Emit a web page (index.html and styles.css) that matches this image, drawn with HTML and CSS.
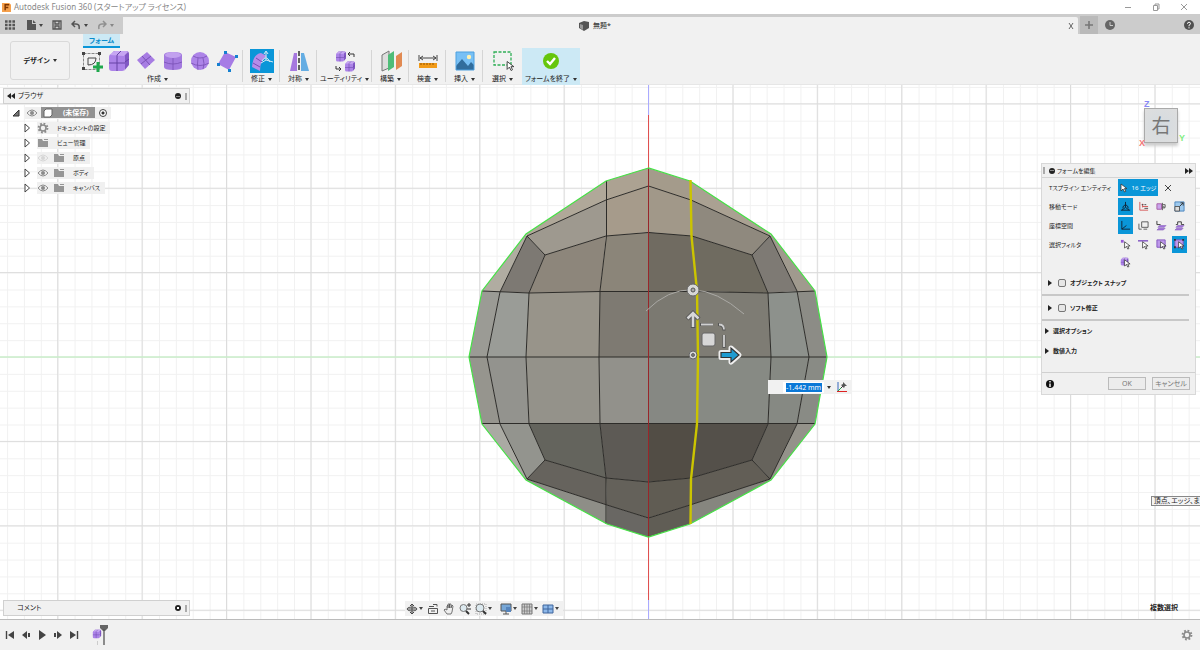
FILE: index.html
```html
<!DOCTYPE html>
<html lang="ja">
<head>
  <meta charset="UTF-8">
  <meta name="viewport" content="width=device-width, initial-scale=1.0">
  <title>Autodesk Fusion 360</title>
  <link rel="stylesheet" href="styles.css">
</head>
<body>
  <!-- Shared icons -->
  <svg class="sprites" aria-hidden="true">
    <symbol id="folder" viewBox="0 0 12 10"><path d="M1 1h4l1 2h-5zM1 3h10v6H1zM7 1h4v1H7z" fill="#969696"/></symbol>
    <symbol id="eye" viewBox="0 0 12 10"><path d="M1 5Q6-1 11 5Q6 11 1 5z" fill="none" stroke="#8b8b8b"/><circle cx="6" cy="5" r="2" fill="#8b8b8b"/></symbol>
    <symbol id="tri" viewBox="0 0 8 10"><path d="M2 1L6.500 5 2 9z" fill="#fff" stroke="#444"/></symbol>
    <symbol id="gear" viewBox="0 0 12 12"><circle cx="6" cy="6" r="4.400" fill="none" stroke="#8b8b8b" stroke-width="2" stroke-dasharray="1.800 1.650"/><circle cx="6" cy="6" r="3" fill="none" stroke="#8b8b8b" stroke-width="1.600"/></symbol>
    <symbol id="cursor" viewBox="0 0 8 10"><path d="M1 1v7l2-2 1.500 3 1.300-.7L4.400 5.600H7z" fill="#fff" stroke="#333" stroke-width=".8"/></symbol>
    <symbol id="box" viewBox="0 0 24 24"><path d="M7 2h12q3 0 3 3v11l-5 6q1-1 1-3V9q0-2-2-2H3z" fill="#8259c4"/><rect x="2" y="5" width="16" height="17" rx="3" fill="#ac83e8"/><path d="M3 6q3-4 5-4h11q2 0 2 1l-4 4z" fill="#c6a6f2"/><path d="M10 6v16M2 14h16M18 13l4-3M10 6l4-4" stroke="#6743a5" fill="none"/></symbol>
  </svg>

  <header class="titlebar">
    <svg class="app-icon" viewBox="0 0 10 10"><path d="M0 0h8l2 2v8H0z" fill="#f5a04c"/><path d="M3.500 8V2H8M3.500 5H7" stroke="#7d3500" stroke-width="1.600" fill="none"/></svg>
    <span class="app-title">Autodesk Fusion 360 (スタートアップ ライセンス)</span>
    <div class="window-buttons">
      <button aria-label="最小化"><svg viewBox="0 0 8 8"><path d="M1 4.500h6"/></svg></button>
      <button aria-label="元に戻す"><svg viewBox="0 0 8 8"><path d="M1.500 2.500h4v5h-4zM3 2V1h4v5H6"/></svg></button>
      <button aria-label="閉じる"><svg viewBox="0 0 8 8"><path d="M1 1l6 6M7 1L1 7"/></svg></button>
    </div>
  </header>

  <nav class="tabbar">
    <div class="quick">
      <button aria-label="データ パネル"><svg viewBox="0 0 10 10" width="10" height="10"><path d="M0 1.500h10M0 5h10M0 8.500h10" stroke="#555" stroke-width="2.400" stroke-dasharray="2.600 1.100"/></svg></button>
      <button class="caret" aria-label="ファイル"><svg viewBox="0 0 10 10" width="10" height="10"><path d="M1 0h5v4h4v6H1zM7 0l3 3H7z" fill="#555"/></svg></button>
      <button aria-label="保存"><svg viewBox="0 0 10 10" width="10" height="10"><path d="M1 1h8v8H1zM3 1v3h4V1M3 9V6h4v3" fill="none" stroke="#555" stroke-width="1.300"/></svg></button>
      <button class="caret" aria-label="元に戻す"><svg viewBox="0 0 10 10" width="10" height="10"><path d="M1 4h4q4 0 3 5M4 1L1 4l3 3" fill="none" stroke="#555" stroke-width="1.500"/></svg></button>
      <button class="caret faded" aria-label="やり直し"><svg viewBox="0 0 10 10" width="10" height="10"><path d="M9 4H5Q1 4 2 9M6 1l3 3-3 3" fill="none" stroke="#555" stroke-width="1.500"/></svg></button>
    </div>
    <div class="doc-tab">
      <span class="doc-name"><svg viewBox="0 0 10 10" width="10" height="10"><path d="M0 2l5-2 5 1v6L5 10 0 7z" fill="#555"/><path d="M1 3l3 1v5L1 7z" fill="#999"/></svg>無題*</span>
      <button class="tab-close" aria-label="タブを閉じる"><svg viewBox="0 0 8 8" width="8" height="8"><path d="M2 1l4 6M6 1L2 7" stroke="#666"/></svg></button>
    </div>
    <div class="tab-tools">
      <button class="new-tab" aria-label="新規"><svg viewBox="0 0 10 10" width="10" height="10"><path d="M5 1v8M1 5h8" stroke="#777" stroke-width="1.600"/></svg></button>
      <button class="jobs" aria-label="ジョブ"><svg viewBox="0 0 10 10" width="10" height="10"><circle cx="5" cy="5" r="5" fill="#666"/><path d="M5 2v3.500h3" stroke="#ccc" fill="none"/></svg></button>
      <button class="help" aria-label="ヘルプ"><svg viewBox="0 0 10 10" width="10" height="10"><circle cx="5" cy="5" r="5" fill="#505050"/><path d="M3.500 3.800Q3.500 2.200 5 2.200T6.500 3.700Q6.500 4.500 5 5.200V6.300M5 7.200v1.200" stroke="#fff" fill="none"/></svg></button>
    </div>
  </nav>

  <!-- Ribbon -->
  <section class="ribbon">
    <button class="workspace">デザイン <i class="arrow"></i></button>
    <div class="ribbon-body">
      <a class="ribbon-tab" href="#form">フォーム</a>
      <div class="groups">
        <div class="group create">
          <div class="icons">
            <button aria-label="スケッチを作成"><svg viewBox="0 0 24 24"><path d="M3.500 4.500h16v16h-16z" fill="none" stroke="#888" stroke-dasharray="3 1"/><path d="M8 16V9h8q0 7-8 7z" fill="none" stroke="#444"/><path d="M2 3h3v3H2zM18 3h3v3h-3zM2 18h3v3H2z" fill="#444"/><path d="M18 13v10M13 18h10" stroke="#1fa84c" stroke-width="3"/></svg></button>
            <button aria-label="ボックス"><svg viewBox="0 0 24 24"><use href="#box"/></svg></button>
            <button aria-label="平面"><svg viewBox="0 0 24 24"><path d="M3 11L13 3l8 8-10 9z" fill="#a77de3"/><path d="M8 7l8 9M7 15L17 7" stroke="#7950b5"/></svg></button>
            <button aria-label="円柱"><svg viewBox="0 0 24 24"><path d="M3 6q0-3 9-3t9 3v12q0 3-9 3t-9-3z" fill="#a37adf"/><ellipse cx="12" cy="6" rx="8" ry="3" fill="#c2a1ef"/><path d="M3 13q9 4 18 0M12 9v12" fill="none" stroke="#7950b5" stroke-width=".8"/></svg></button>
            <button aria-label="球"><svg viewBox="0 0 24 24"><circle cx="12" cy="12" r="9" fill="#ad84e8"/><path d="M5 7q7 4 14 0M3 14q9 5 18 0M10 9q-1 6 0 12M15 9q2 6 0 11" fill="none" stroke="#7950b5" stroke-width=".8"/></svg></button>
            <button aria-label="面"><svg viewBox="0 0 24 24"><path d="M10 3l11 5-7 13L3 15z" fill="#a67be5"/><path d="M9 2h3v3H9zM20 6h3v3h-3zM2 14h3v3H2zM13 20h3v3h-3z" fill="#1580d0"/></svg></button>
          </div>
          <button class="label">作成<i class="arrow"></i></button>
        </div>
        <div class="group">
          <button class="active" aria-label="フォームを編集"><svg viewBox="0 0 24 24"><path d="M2 18q1-13 9-14l6 3q-7 4-7 15z" fill="#b58ce9"/><path d="M6 9l6 4M3 14l7 4" stroke="#764bb4"/><path d="M16 11V3M16 11l7 2M16 11l-5 3M14 5l2-3 2 3M12 12q4-7 8 1" fill="none" stroke="#d5eaf5"/></svg></button>
          <button class="label">修正<i class="arrow"></i></button>
        </div>
        <div class="group">
          <button aria-label="対称"><svg viewBox="0 0 24 24"><path d="M3 22L7 4h3v18z" fill="#a678df"/><path d="M14 4h3l5 18h-8z" fill="#64ade3"/><path d="M12 2v21" stroke="#333" stroke-width="1.500" stroke-dasharray="5 2"/></svg></button>
          <button class="label">対称<i class="arrow"></i></button>
        </div>
        <div class="group wide">
          <button aria-label="ユーティリティ"><svg viewBox="0 0 24 24"><use href="#box" x="2" y="1" width="12" height="13"/><use href="#box" x="11" y="11" width="12" height="13"/><path d="M21 8V5h-6M17 3l-2 2 2 2M3 17v3h5M6 18l2 2-2 2" stroke="#333" fill="none"/></svg></button>
          <button class="label">ユーティリティ<i class="arrow"></i></button>
        </div>
        <div class="group">
          <button aria-label="構築"><svg viewBox="0 0 24 24"><path d="M3 6l7-4v17l-7 3z" fill="#ddd" stroke="#777"/><path d="M9 6l6-4v16l-6 4z" fill="#4ebd78"/><path d="M17 7l6-4v14l-6 4z" fill="#e18a52"/></svg></button>
          <button class="label">構築<i class="arrow"></i></button>
        </div>
        <div class="group">
          <button aria-label="検査"><svg viewBox="0 0 24 24"><path d="M3 14h18v5H3z" fill="#f29b18"/><path d="M5 14v2M8 14v2M11 14v2M14 14v2M17 14v2" stroke="#945500"/><path d="M3 6v6M21 6v6M4 9h16M7 7L4 9l3 2M17 7l3 2-3 2" stroke="#444" fill="none"/></svg></button>
          <button class="label">検査<i class="arrow"></i></button>
        </div>
        <div class="group">
          <button aria-label="挿入"><svg viewBox="0 0 24 24"><path d="M3 3h18v18H3z" fill="#78c0f5"/><path d="M3 17l6-7 6 7 3-4 3 3v5H3z" fill="#316d9d"/><circle cx="16" cy="8" r="2.200" fill="#fff2b3"/><path d="M3 3h18v18H3z" fill="none" stroke="#4ca0df"/></svg></button>
          <button class="label">挿入<i class="arrow"></i></button>
        </div>
        <div class="group last">
          <button aria-label="選択"><svg viewBox="0 0 24 24"><path d="M3 3h17v13H3z" fill="none" stroke="#30af57" stroke-width="1.300" stroke-dasharray="3 1.500"/><use href="#cursor" x="15" y="11" width="9" height="12"/></svg></button>
          <button class="label">選択<i class="arrow"></i></button>
        </div>
        <div class="group finish">
          <button aria-label="フォームを終了"><svg viewBox="0 0 24 24"><circle cx="12" cy="12" r="8" fill="#65c60c"/><path d="M8 12l3 3 5-6" fill="none" stroke="#fff" stroke-width="2.400"/></svg></button>
          <button class="label">フォームを終了<i class="arrow"></i></button>
        </div>
      </div>
    </div>
  </section>

  <!-- Modelling canvas -->
  <main class="viewport">
    <svg class="scene" viewBox="0 85 1200 534" preserveAspectRatio="xMidYMid slice">
      <defs>
        <pattern id="minor" x="648.500" y="357" width="16.880" height="16.880" patternUnits="userSpaceOnUse"><path d="M.5 0v17M0 .5h17" stroke="#f1f1f1" fill="none"/></pattern>
        <pattern id="major" x="648" y="356.500" width="84.400" height="84.400" patternUnits="userSpaceOnUse"><path d="M.5 0v85M0 .5h85" stroke="#dcdcdc" fill="none"/></pattern>
      </defs>
      <rect y="85" width="1200" height="534" fill="url(#minor)"/>
      <rect y="85" width="1200" height="534" fill="url(#major)"/>
      <path d="M0 357h1200" stroke="#bff5bf"/>
      <path d="M648.500 85v30M648.500 600v19" stroke="#aaaaff"/>
      <path d="M648.500 115v485" stroke="#e05050"/>

      <!-- outer ring of faces -->
      <g>
        <path d="M648 168L606 181V200L648 186z" fill="#aca292"/>
        <path d="M606 181L526 234 527 236 606 200z" fill="#b0a899"/>
        <path d="M526 234L482 291 500 292 527 236z" fill="#b0aca1"/>
        <path d="M482 291L469 357H487L500 292z" fill="#9b9b95"/>
        <path d="M469 357L482 424H500L487 357z" fill="#96958e"/>
        <path d="M482 424L526 480 527 479 500 424z" fill="#aaaaa3"/>
        <path d="M526 480L607 524V505L527 479z" fill="#8e8e87"/>
        <path d="M607 524L648 537V518L607 505z" fill="#696763"/>
        <path d="M648 537L690 524V505L648 518z" fill="#605d55"/>
        <path d="M690 524L771 480 770 479 690 505z" fill="#86867f"/>
        <path d="M771 480L815 424H797L770 479z" fill="#94928a"/>
        <path d="M815 424L827 357H809L797 424z" fill="#898b85"/>
        <path d="M827 357L815 291H797L809 357z" fill="#8c8c86"/>
        <path d="M815 291L771 234 770 236 797 291z" fill="#a09a8e"/>
        <path d="M771 234L690 181 691 200 770 236z" fill="#aaa192"/>
        <path d="M690 181L648 168V186L691 200z" fill="#a49b8b"/>
      </g>
      <!-- second ring -->
      <g>
        <path d="M648 186L606 200V236L648 232z" fill="#a69b8b"/>
        <path d="M606 200L527 236 545 255 606 236z" fill="#9e998f"/>
        <path d="M527 236L500 292 529 293 545 255z" fill="#7d7973"/>
        <path d="M500 292L487 357H526L529 293z" fill="#9a9c97"/>
        <path d="M487 357L500 424H529L526 357z" fill="#93938e"/>
        <path d="M500 424L527 479 545 460 529 424z" fill="#93948e"/>
        <path d="M527 479L607 505 606 478 545 460z" fill="#66635d"/>
        <path d="M607 505L648 518V482L606 478z" fill="#64615a"/>
        <path d="M648 518L690 505 691 478 648 482z" fill="#605c53"/>
        <path d="M690 505L770 479 752 460 691 478z" fill="#625e56"/>
        <path d="M770 479L797 424H768L752 460z" fill="#66635c"/>
        <path d="M797 424L809 357H771L768 424z" fill="#868983"/>
        <path d="M809 357L797 291 768 293 771 357z" fill="#8d918c"/>
        <path d="M797 291L770 236 752 255 768 293z" fill="#7e7a74"/>
        <path d="M770 236L691 200 692 236 752 255z" fill="#8f897e"/>
        <path d="M691 200L648 186V232L692 236z" fill="#a19889"/>
      </g>
      <!-- front faces -->
      <g>
        <path d="M545 255L606 236 600 292 529 293z" fill="#8d867b"/>
        <path d="M606 236L648 232V291L600 292z" fill="#8b8579"/>
        <path d="M648 232L692 236 697 291H648z" fill="#706b61"/>
        <path d="M692 236L752 255 768 293 697 291z" fill="#6f6b60"/>
        <path d="M529 293L600 291 599 357H526z" fill="#98948a"/>
        <path d="M600 291H648V357H599z" fill="#7e7a72"/>
        <path d="M648 291H697L698 357H648z" fill="#7b7971"/>
        <path d="M697 291L768 293 771 357H698z" fill="#7e7c74"/>
        <path d="M526 357H599L600 424H529z" fill="#94928a"/>
        <path d="M599 357H648V424H600z" fill="#92918b"/>
        <path d="M648 357H698L697 424H648z" fill="#868883"/>
        <path d="M698 357H771L768 424H697z" fill="#878a84"/>
        <path d="M529 424H600L606 478 545 460z" fill="#64645d"/>
        <path d="M600 424H648V482L606 478z" fill="#5d5a55"/>
        <path d="M648 424H697L691 478 648 482z" fill="#524d45"/>
        <path d="M697 424H768L752 460 691 478z" fill="#54504a"/>
      </g>
      <!-- edges -->
      <g fill="none" stroke="#2d2c29">
        <path d="M648.500 186L606 200 527 236 500 292 487 357 500 424 527 479 607 505 648.500 518 690 505 770 479 797 424 809 357 797 291 770 236 691 200z"/>
        <path d="M648.500 232.500L606 236 545 255 529 293 526 357 529 424 545 460 606 478 648.500 482 691 478 752 460 768 424 771 357 768 293 752 255 692 236z"/>
        <path d="M606.500 181V236L600 291 599 357 600 424 606 478V524M527 236L545 255M770 236L752 255M527 479L545 460M770 479L752 460"/>
        <path d="M482 291L529 293 600 291.500H697L768 293 815 291M469 357H827M482 423.500H815"/>
      </g>
      <path d="M648.500 168V537" stroke="#98262a"/>
      <path d="M648.500 168L606 181 526 234 482 291 469 357 482 424 526 480 607 524 648.500 537 690 524 771 480 815 424 827 357 815 291 771 234 690 181z" fill="none" stroke="#45e245" stroke-width="1.200"/>
      <path d="M690.500 180L691.500 236 697 291 698 357 697 424 691 479 690.500 524" fill="none" stroke="#cbc400" stroke-width="2.400"/>

      <!-- move manipulator -->
      <path d="M646 311Q690 267 744 314" fill="none" stroke="#aaa9a5"/>
      <g stroke="#666" fill="#d7d7d7">
        <circle cx="693" cy="290" r="6"/>
        <circle cx="693" cy="290" r="2" fill="#aaa" stroke="#555"/>
        <circle cx="693" cy="355" r="4"/>
        <circle cx="693" cy="355" r="1.500" fill="#777"/>
        <rect x="702" y="333" width="13" height="13" rx="2"/>
      </g>
      <path d="M693 328V313M687 319l6-6 6 6" fill="none" stroke="#555" stroke-width="4.400"/>
      <path d="M693 327V313M687.500 318.500l5.500-5.500 5.500 5.500" fill="none" stroke="#d7d7d7" stroke-width="2.600"/>
      <path d="M700 324.500h13M718 324.500q6 0 6 6M724 335v13" fill="none" stroke="#555" stroke-width="3"/>
      <path d="M701 324.500h12M719 324.500q5 0 5 5M724 335v12" fill="none" stroke="#d0d0d0" stroke-width="1.800"/>
      <path d="M721 352.500h10V348l8 7-8 7v-4.500h-10z" fill="#1e9bd0" stroke="#eee" stroke-width="5" stroke-linejoin="round"/>
      <path d="M721 352.500h10V348l8 7-8 7v-4.500h-10z" fill="#1e9bd0" stroke="#333" stroke-width="1.200"/>
    </svg>

    <div class="value-box">
      <input type="text" value="-1.442 mm" aria-label="距離">
      <i class="arrow"></i>
      <svg viewBox="0 0 12 12" width="12" height="12"><path d="M2 1v10" stroke="#3568bc"/><path d="M1 10.500h10" stroke="#d22"/><path d="M2 10l4-4" stroke="#2a4"/><path d="M5 7l2-2" stroke="#333"/><path d="M7 1l4 4-2 0-1 2-3-3 2-1z" fill="#555"/></svg>
    </div>

    <!-- Browser palette -->
    <aside class="browser">
      <div class="palette-head">
        <svg viewBox="0 0 8 6" width="8" height="6"><path d="M4 0v6L0 3zM8 0v6L4 3z" fill="#222"/></svg>
        <span>ブラウザ</span>
        <i class="dot minus"></i><i class="grip"></i>
      </div>
      <ul class="tree">
        <li class="root">
          <svg viewBox="0 0 8 8" width="8" height="8"><path d="M7 1v6H1z" fill="#777" stroke="#333"/></svg>
          <span class="node"><svg width="12" height="10"><use href="#eye"/></svg><span class="doc"><svg viewBox="0 0 10 10" width="10" height="10"><path d="M1 3l2-2h6v6L7 9H1z" fill="#fff" stroke="#666"/></svg>(未保存)</span><i class="radio"></i></span>
        </li>
        <li><svg width="8" height="10"><use href="#tri"/></svg><span class="node"><svg width="12" height="12"><use href="#gear"/></svg><span>ドキュメントの設定</span></span></li>
        <li><svg width="8" height="10"><use href="#tri"/></svg><span class="node"><svg width="12" height="10"><use href="#folder"/></svg><span>ビュー管理</span></span></li>
        <li><svg width="8" height="10"><use href="#tri"/></svg><span class="node"><svg class="off" width="12" height="10"><use href="#eye"/></svg><svg width="12" height="10"><use href="#folder"/></svg><span>原点</span></span></li>
        <li><svg width="8" height="10"><use href="#tri"/></svg><span class="node"><svg width="12" height="10"><use href="#eye"/></svg><svg width="12" height="10"><use href="#folder"/></svg><span>ボディ</span></span></li>
        <li><svg width="8" height="10"><use href="#tri"/></svg><span class="node"><svg width="12" height="10"><use href="#eye"/></svg><svg width="12" height="10"><use href="#folder"/></svg><span>キャンバス</span></span></li>
      </ul>
    </aside>

    <div class="comments palette-head"><span>コメント</span><i class="dot plus"></i><i class="grip"></i></div>

    <!-- View cube -->
    <div class="viewcube">
      <span class="axis z">Z</span>
      <button class="face">右</button>
      <span class="axis x">X</span>
      <span class="axis y">Y</span>
    </div>

    <!-- Edit form dialog -->
    <form class="dialog">
      <div class="dialog-head"><i class="grip"></i><i class="dot minus"></i><span>フォームを編集</span><svg viewBox="0 0 8 6" width="8" height="6"><path d="M0 0v6l4-3zM4 0v6l4-3z" fill="#222"/></svg></div>
      <div class="rows">
        <div class="row">
          <span class="name">Tスプライン エンティティ</span>
          <button type="button" class="pick"><svg width="8" height="10"><use href="#cursor"/></svg>16 エッジ</button>
          <button type="button" class="clear" aria-label="クリア"><svg viewBox="0 0 8 8" width="8" height="8"><path d="M1 1l6 6M7 1L1 7" stroke="#444"/></svg></button>
        </div>
        <div class="row">
          <span class="name">移動モード</span>
          <button type="button" class="tool on" aria-label="マルチ"><svg viewBox="0 0 12 12"><path d="M6 7V1M6 7l-4 3M6 7l4 3M3 8q0-3 3-4 3 1 3 4M1 10h10" fill="none" stroke="#123"/></svg></button>
          <button type="button" class="tool" aria-label="移動"><svg viewBox="0 0 12 12"><path d="M2 1v9h9M5 6h6M5 3v4" fill="none" stroke="#d45454"/><path d="M4 4h2M7 4h2M7 8h4" stroke="#444"/></svg></button>
          <button type="button" class="tool" aria-label="回転"><svg viewBox="0 0 12 12"><path d="M1 3h5v6H1z" fill="#c9a4ec" stroke="#a65ba5"/><path d="M7 2v8M7 4h3v3H8M9 5.500L7.500 7 9 8.500" fill="none" stroke="#555"/></svg></button>
          <button type="button" class="tool" aria-label="尺度"><svg viewBox="0 0 12 12"><path d="M1 1h10v10H1z" fill="#9dc9ee" stroke="#4a83bd"/><path d="M1 6h5v5H1z" fill="#ddd" stroke="#555"/><path d="M6 6l4-4M7 2h3v3" fill="none" stroke="#333"/></svg></button>
        </div>
        <div class="row">
          <span class="name">座標空間</span>
          <button type="button" class="tool on" aria-label="ワールド空間"><svg viewBox="0 0 12 12"><path d="M2 1v9h9M2 10l5-4" fill="none" stroke="#123"/></svg></button>
          <button type="button" class="tool" aria-label="ビュー空間"><svg viewBox="0 0 12 12"><path d="M4 2h7v6H4zM6 10h4M1 4v6h3" fill="none" stroke="#555"/></svg></button>
          <button type="button" class="tool" aria-label="選択項目の空間"><svg viewBox="0 0 12 12"><path d="M1 1v4h4" fill="none" stroke="#333"/><path d="M4 6h7l-2 2H2zM3 9h7l-2 2H1z" fill="#a474dc" stroke="#7950b5" stroke-width=".5"/></svg></button>
          <button type="button" class="tool" aria-label="ローカル空間"><svg viewBox="0 0 12 12"><path d="M2 5h2V2h4v3h3" fill="none" stroke="#333"/><path d="M4 6h7l-2 2H2zM3 9h7l-2 2H1z" fill="#a474dc" stroke="#7950b5" stroke-width=".5"/></svg></button>
        </div>
        <div class="row">
          <span class="name">選択フィルタ</span>
          <button type="button" class="tool" aria-label="頂点"><svg viewBox="0 0 12 12"><path d="M1 1h3v3H1z" fill="#9658d8"/><use href="#cursor" x="4" y="2" width="8" height="10"/></svg></button>
          <button type="button" class="tool" aria-label="エッジ"><svg viewBox="0 0 12 12"><path d="M0 2h11" stroke="#7c4ec0" stroke-width="1.500"/><use href="#cursor" x="4" y="2" width="8" height="10"/></svg></button>
          <button type="button" class="tool" aria-label="面"><svg viewBox="0 0 12 12"><path d="M1 1h9v8H1z" fill="#be98eb" stroke="#8254c0"/><use href="#cursor" x="4" y="2" width="8" height="10"/></svg></button>
          <button type="button" class="tool on" aria-label="すべて"><svg viewBox="0 0 12 12"><path d="M1 1h9v8H1z" fill="#be98eb" stroke="#8254c0"/><path d="M0 0h2v2H0zM9 0h2v2H9zM0 8h2v2H0z" fill="#333"/><use href="#cursor" x="4" y="2" width="8" height="10"/></svg></button>
        </div>
        <div class="row short">
          <span class="name"></span>
          <button type="button" class="tool" aria-label="ボディ"><svg viewBox="0 0 12 12"><use href="#box" width="10" height="10"/><use href="#cursor" x="4" y="2" width="8" height="10"/></svg></button>
        </div>
      </div>
      <div class="fold ruled"><i class="right"></i><input type="checkbox" id="snap"><label for="snap">オブジェクト スナップ</label></div>
      <div class="fold ruled"><i class="right"></i><input type="checkbox" id="soft"><label for="soft">ソフト修正</label></div>
      <div class="fold flat"><i class="right"></i><span>選択オプション</span></div>
      <div class="fold flat"><i class="right"></i><span>数値入力</span></div>
      <div class="dialog-foot">
        <svg viewBox="0 0 8 8" width="8" height="8"><circle cx="4" cy="4" r="4" fill="#111"/><path d="M4 1v1.500M4 3.500V7" stroke="#fff" stroke-width="1.400"/></svg>
        <button type="button" class="ok">OK</button>
        <button type="button">キャンセル</button>
      </div>
    </form>

    <div class="hint">頂点、エッジ、ま</div>
    <div class="status">複数選択</div>

    <div class="navbar">
      <button class="caret" aria-label="オービット"><svg viewBox="0 0 12 12"><path d="M6 1v10M1 6h10M4 3l2-2 2 2M4 9l2 2 2-2" fill="none" stroke="#444"/><ellipse cx="6" cy="6" rx="5" ry="2" fill="none" stroke="#555"/></svg></button>
      <button aria-label="ビュー正面"><svg viewBox="0 0 12 12"><path d="M1.500 5.500h9v5h-9zM4 8h4M2 3.500h5M6 1.500h4v2" fill="none" stroke="#555"/></svg></button>
      <button aria-label="画面移動"><svg viewBox="0 0 12 12"><path d="M4 11L1 7l1-1 2 1V3l1-1v3-4h1.500v4-4H8v4l1-3 1 1-1 6-1 2z" fill="#eee" stroke="#555" stroke-width=".8"/></svg></button>
      <button aria-label="ズーム"><svg viewBox="0 0 12 12"><circle cx="4.500" cy="5" r="3.500" fill="#dce9ef" stroke="#777"/><path d="M7 8l3 3" stroke="#333" stroke-width="2"/><path d="M10 0v4M8 2h4M8 6h4" stroke="#333"/></svg></button>
      <button class="caret" aria-label="フィット"><svg viewBox="0 0 12 12"><path d="M1 1h10v10H1z" fill="none" stroke="#aaa" stroke-dasharray="1 1"/><circle cx="5" cy="5" r="4" fill="#dce9ef" stroke="#777"/><path d="M8 8l3 3" stroke="#333" stroke-width="2"/></svg></button>
      <button class="caret display" aria-label="表示設定"><svg viewBox="0 0 12 12"><path d="M1 1h10v7H1z" fill="#77a7d7" stroke="#555"/><path d="M3 11h6M6 8v3" stroke="#555"/><path d="M6 4h5v5H6z" fill="#5584bd"/></svg></button>
      <button class="caret" aria-label="グリッド"><svg viewBox="0 0 12 12"><path d="M1 1h10v10H1z" fill="#ccc" stroke="#777"/><path d="M3.500 1v10M6 1v10M8.500 1v10M1 4h10M1 8h10" stroke="#777" stroke-width=".7"/></svg></button>
      <button class="caret" aria-label="ビューポート"><svg viewBox="0 0 12 12"><path d="M1 2h10v8H1z" fill="#8db8e9" stroke="#3f649c"/><path d="M6 2v8M1 6h10" stroke="#3f649c"/></svg></button>
    </div>
  </main>

  <footer class="timeline">
    <button aria-label="先頭"><svg viewBox="0 0 10 10"><path d="M1.500 1v8" stroke="#444" stroke-width="1.400"/><path d="M9 1v8L3 5z" fill="#444"/></svg></button>
    <button aria-label="前"><svg viewBox="0 0 10 10"><path d="M6 1v8L1 5zM7 3h2v4H7z" fill="#444"/></svg></button>
    <button aria-label="再生"><svg viewBox="0 0 10 10"><path d="M2 0v10l7-5z" fill="#444"/></svg></button>
    <button aria-label="次"><svg viewBox="0 0 10 10"><path d="M4 1v8l5-4zM1 3h2v4H1z" fill="#444"/></svg></button>
    <button aria-label="最後"><svg viewBox="0 0 10 10"><path d="M8.500 1v8" stroke="#444" stroke-width="1.400"/><path d="M1 1v8l6-4z" fill="#444"/></svg></button>
    <svg class="marker" viewBox="0 0 18 22" width="18" height="22"><use href="#box" x="1" y="5" width="10" height="10"/><path d="M6.500 17v4" stroke="#ccc"/><path d="M9 1h8v3l-3 3h-2L9 4z" fill="#666"/><path d="M13 5v16" stroke="#555" stroke-width="1.300"/></svg>
    <button class="settings" aria-label="設定"><svg viewBox="0 0 12 12"><use href="#gear"/></svg></button>
  </footer>
</body>
</html>
```
FILE: styles.css
```css
* {
  box-sizing: border-box;
}
body {
  margin: 0;
  height: 100vh;
  display: flex;
  flex-direction: column;
  overflow: hidden;
  background: #fff;
  color: #222;
  font-family: "Noto Sans", "Noto Sans CJK JP", sans-serif;
  font-size: 7px;
  line-height: 10px;
  font-feature-settings: "palt";
}
button,
input {
  font: inherit;
  color: inherit;
  font-feature-settings: inherit;
}
button {
  display: flex;
  align-items: center;
  justify-content: center;
  padding: 0;
  border: 0;
  background: none;
  white-space: nowrap;
}
svg {
  display: block;
  flex: none;
}
.sprites {
  position: absolute;
  width: 0;
  height: 0;
}
.arrow {
  flex: none;
  border: 2px solid transparent;
  border-top: 3px solid #333;
  border-bottom: 0;
  margin-left: 3px;
}
.caret::after {
  content: "";
  border: 2px solid transparent;
  border-top: 3px solid #444;
  border-bottom: 0;
  margin-left: 3px;
}

/* Title bar */
.titlebar {
  display: flex;
  align-items: center;
  height: 14px;
  padding: 0 12px 0 2px;
  color: #888;
  font-size: 8px;
  line-height: 12px;
}
.app-icon {
  width: 9px;
  height: 9px;
  margin-right: 3px;
}
.window-buttons {
  display: flex;
  gap: 20px;
  margin-left: auto;
}
.window-buttons svg {
  width: 8px;
  height: 8px;
  fill: none;
  stroke: #999;
}

/* Document tabs */
.tabbar {
  display: flex;
  height: 20px;
  border-top: 2px solid #ccc;
  background: #ccc;
}
.quick {
  display: flex;
  align-items: center;
  gap: 9px;
  width: 123px;
  padding-left: 5px;
}
.quick button:nth-child(2) {
  margin-left: 2px;
}
.faded {
  opacity: 0.5;
}
.doc-tab {
  flex: 1;
  display: flex;
  align-items: center;
  padding-right: 3px;
  background: #f1f1f1;
  margin-top: 1px;
  border-radius: 0 2px 0 0;
}
.doc-name {
  display: flex;
  align-items: center;
  gap: 4px;
  margin: 0 auto;
}
.tab-tools {
  display: flex;
  align-items: center;
  width: 122px;
  padding: 0 6px 0 2px;
}
.new-tab {
  width: 18px;
  height: 18px;
  background: #bababa;
}
.jobs {
  margin-left: 7px;
}
.help {
  margin-left: auto;
}

/* Ribbon */
.ribbon {
  display: flex;
  height: 51px;
  background: #f1f1f1;
  border-bottom: 1px solid #e6e6e6;
}
.workspace {
  width: 60px;
  height: 39px;
  margin: 7px 13px 0 10px;
  border: 1px solid #d9d9d9;
  border-radius: 3px;
  font-weight: bold;
}
.ribbon-tab {
  display: block;
  width: 37px;
  height: 14px;
  border-bottom: 2px solid #0a96d8;
  background: #cce9f5;
  color: #0a8ccc;
  font-weight: bold;
  line-height: 13px;
  text-align: center;
  text-decoration: none;
}
.groups {
  display: flex;
}
.group {
  display: flex;
  flex-direction: column;
  align-items: center;
  width: 37px;
  height: 37px;
  padding-top: 1px;
  background: linear-gradient(#d5d5d5, #d5d5d5) right 2px / 1px 32px no-repeat;
}
.group svg {
  width: 24px;
  height: 24px;
}
.create {
  width: 160px;
  align-items: flex-start;
}
.icons {
  display: flex;
  gap: 3px;
  margin-left: -3px;
}
.create .label {
  margin-left: 64px;
}
.label {
  margin-top: 1px;
}
.wide {
  width: 55px;
}
.last {
  width: 39px;
  background: none;
}
.finish {
  width: 58px;
  background: #cce9f5;
}
.active {
  background: #0a96d8;
}

/* Viewport */
.viewport {
  position: relative;
  flex: 1;
  overflow: hidden;
}
.scene {
  position: absolute;
  width: 100%;
  height: 100%;
}
.value-box {
  position: absolute;
  left: calc(50% + 168px);
  top: calc(50% + 28px);
  display: flex;
  align-items: center;
  width: 84px;
  height: 14px;
  padding: 0 4px 0 15px;
  background: #f1f1f1;
}
.value-box input {
  width: 41px;
  height: 11px;
  padding: 0 2px 0 3px;
  border: 0;
  color: #fff;
  background: linear-gradient(#0a78d7, #0a78d7) 3px center / 36px 9px no-repeat #fff;
}
.value-box .arrow {
  margin: 0 5px 0 3px;
}

/* Palettes */
.palette-head {
  display: flex;
  align-items: center;
  height: 16px;
  padding: 0 2px 0 3px;
  border: 1px solid #d0d0d0;
  background: #f1f1f1;
}
.palette-head span {
  flex: 1;
  margin-left: 3px;
}
.dot {
  flex: none;
  width: 6px;
  height: 6px;
  border-radius: 50%;
  background: #222;
}
.minus {
  background: linear-gradient(#888, #888) center / 4px 1px no-repeat #222;
}
.plus {
  background: radial-gradient(#fff 1px, #222 1px);
}
.grip {
  width: 2px;
  height: 7px;
  margin-left: 4px;
  border: solid #aaa;
  border-width: 0 1px;
}
.browser {
  position: absolute;
  left: 3px;
  top: 3px;
  width: 187px;
}
.tree {
  margin: 1px 0 0;
  padding: 0;
  list-style: none;
  font-size: 6px;
}
.tree li {
  display: flex;
  align-items: center;
  gap: 6px;
  height: 15px;
  padding-left: 20px;
}
.tree .root {
  gap: 5px;
  padding-left: 9px;
}
.node {
  display: flex;
  align-items: center;
  gap: 4px;
  height: 12px;
  padding: 0 5px 0 0;
  background: #f0f0f0;
}
.node > span {
  margin-left: 4px;
}
.root .node {
  padding: 0 4px 0 1px;
}
.off {
  opacity: 0.25;
}
.node .doc {
  display: flex;
  align-items: center;
  gap: 10px;
  width: 54px;
  height: 11px;
  margin-left: -1px;
  padding-left: 2px;
  background: #929292;
  color: #fff;
  font-size: 7px;
  font-weight: bold;
}
.radio {
  width: 8px;
  height: 8px;
  border: 1px solid #444;
  border-radius: 50%;
  background: radial-gradient(#333 1px, #fff 2px);
}
.comments {
  position: absolute;
  left: 3px;
  bottom: 3px;
  width: 187px;
}
.comments span {
  margin-left: 10px;
}

/* View cube */
.viewcube {
  position: absolute;
  top: 23px;
  right: 22px;
  width: 34px;
}
.face {
  width: 34px;
  height: 35px;
  border: 1px solid #aaa;
  background: radial-gradient(#d4dbe0, #dedede);
  box-shadow: 0 3px 3px #ccc;
  color: #777;
  font-size: 19px;
}
.axis {
  position: absolute;
  font-family: "Liberation Sans", sans-serif;
  font-size: 9px;
  font-weight: bold;
}
.z {
  left: 0;
  top: -9px;
  color: #8888f5;
}
.x {
  left: -5px;
  bottom: -5px;
  color: #f27777;
}
.y {
  right: -7px;
  bottom: 0;
  color: #80ee80;
}

/* Edit form dialog */
.dialog {
  position: absolute;
  top: 78px;
  right: 4px;
  width: 155px;
  border: 1px solid #d8d8d8;
  background: #f0f0f0;
  font-size: 6px;
}
.dialog-head {
  display: flex;
  align-items: center;
  height: 14px;
  padding-right: 2px;
  border-bottom: 1px solid #d4d4d4;
}
.dialog-head .grip {
  margin: 0 4px 0 1px;
}
.dialog-head span {
  flex: 1;
  margin-left: 2px;
}
.row {
  display: flex;
  align-items: center;
  gap: 3px;
  height: 19px;
  padding-left: 7px;
}
.short {
  height: 17px;
}
.name {
  width: 66px;
  white-space: nowrap;
}
.pick {
  gap: 4px;
  width: 40px;
  height: 17px;
  background: #0a96d8;
  color: #fff;
}
.clear {
  margin-left: 3px;
}
.tool {
  width: 15px;
  height: 17px;
}
.tool svg {
  width: 11px;
  height: 11px;
}
.on {
  background: #0a96d8;
}
.fold {
  display: flex;
  align-items: center;
  height: 25px;
  margin-right: 6px;
  padding-left: 6px;
  font-weight: bold;
}
.ruled {
  border-bottom: 2px solid #c8c8c8;
}
.flat {
  height: 20px;
  padding-left: 3px;
}
.flat:nth-last-child(2) {
  margin-bottom: 11px;
}
.right {
  margin-right: 4px;
  border: 3px solid transparent;
  border-left: 4px solid #222;
  border-right: 0;
}
.fold input {
  width: 8px;
  height: 8px;
  margin: 0 4px 0 2px;
  appearance: none;
  border: 1px solid #777;
  border-radius: 2px;
  background: #e6e6e6;
}
.dialog-foot {
  display: flex;
  align-items: center;
  gap: 6px;
  height: 22px;
  padding: 0 5px 0 4px;
  border-top: 1px solid #d0d0d0;
}
.dialog-foot button {
  width: 38px;
  height: 13px;
  border: 1px solid #bbb;
  background: #ececec;
  color: #777;
  font-size: 7px;
}
.dialog-foot .ok {
  margin-left: auto;
}

/* Hints over the canvas */
.hint {
  position: absolute;
  right: 0;
  bottom: 113px;
  height: 10px;
  padding: 0 0 0 2px;
  border: 1px solid #888;
  border-right: 0;
  background: #f4f4f4;
  line-height: 8px;
  white-space: nowrap;
}
.status {
  position: absolute;
  right: 22px;
  bottom: 6px;
  font-weight: bold;
}
.navbar {
  position: absolute;
  left: calc(50% - 195px);
  bottom: 3px;
  display: flex;
  align-items: center;
  gap: 4px;
  width: 158px;
  height: 15px;
  padding-left: 1px;
  background: #f1f1f1;
}
.navbar svg {
  width: 12px;
  height: 12px;
}
.navbar .caret::after {
  margin-left: 1px;
}
.display {
  margin-left: 4px;
}

/* Timeline */
.timeline {
  display: flex;
  align-items: center;
  gap: 6px;
  height: 31px;
  padding: 0 7px 0 5px;
  border-top: 1px solid #bbb;
  background: #f1f1f1;
}
.timeline button svg {
  width: 10px;
  height: 10px;
}
.marker {
  margin-left: 6px;
}
.timeline .settings {
  margin-left: auto;
}
.timeline .settings svg {
  width: 12px;
  height: 12px;
}
```
